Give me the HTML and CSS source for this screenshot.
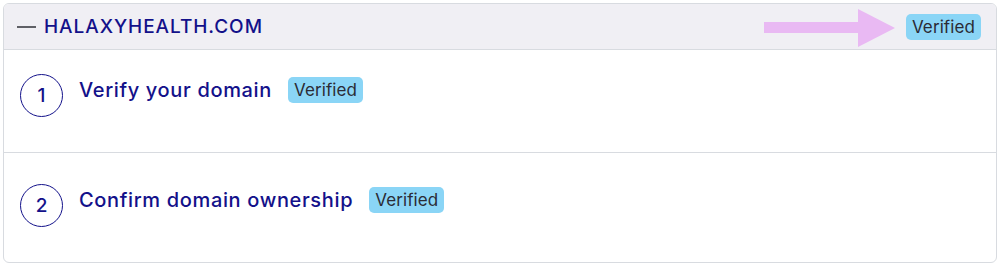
FILE: index.html
```html
<!DOCTYPE html>
<html>
<head>
<meta charset="utf-8">
<link rel="stylesheet" href="styles.css">
</head>
<body>
<div class="card">
  <div class="card-head">
    <span class="dash"></span>
    <span class="domain">HALAXYHEALTH.COM</span>
    <div class="head-right">
      <svg class="arrow" width="131" height="38" viewBox="0 0 131 38">
        <rect x="0" y="13" width="96" height="11" fill="#e9b9f3"/>
        <polygon points="94,0 131,19 94,38" fill="#e9b9f3"/>
      </svg>
      <span class="badge">Verified</span>
    </div>
  </div>
  <div class="step">
    <div class="num">1</div>
    <span class="step-title">Verify your domain</span>
    <span class="badge">Verified</span>
  </div>
  <div class="step">
    <div class="num">2</div>
    <span class="step-title">Confirm domain ownership</span>
    <span class="badge">Verified</span>
  </div>
</div>
</body>
</html>
```

FILE: styles.css
```css
html, body {
  margin: 0;
  padding: 0;
  background: #ffffff;
}
body {
  padding: 3px;
  font-family: "Inter", "Liberation Sans", sans-serif;
}
.card {
  width: 994px;
  height: 260px;
  border: 1px solid #d8dbe0;
  border-radius: 6px;
  box-sizing: border-box;
  overflow: hidden;
  display: flex;
  flex-direction: column;
}
.card-head {
  height: 46px;
  flex: none;
  background: #f0eff4;
  border-bottom: 1px solid #d8dbe0;
  display: flex;
  align-items: center;
  padding: 0 15px 0 13px;
  box-sizing: border-box;
}
.dash {
  width: 19px;
  height: 2px;
  background: #5f6066;
  margin-right: 8px;
  margin-top: 1px;
}
.domain {
  color: #13118a;
  font-size: 19px;
  font-weight: 500;
  letter-spacing: 0.95px;
}
.head-right {
  margin-left: auto;
  display: flex;
  align-items: center;
}
.arrow {
  display: block;
  margin-right: 11px;
  margin-top: 2px;
}
.badge {
  background: #8ad5f6;
  color: #2b2b35;
  font-size: 17px;
  line-height: 26px;
  height: 26px;
  padding: 0 6px;
  border-radius: 5px;
  letter-spacing: 0.1px;
}
.step {
  height: 103px;
  flex: none;
  box-sizing: border-box;
  display: flex;
  align-items: flex-start;
  padding: 24px 0 0 16px;
  border-bottom: 1px solid #d8dbe0;
}
.step:last-child {
  flex: 1;
  border-bottom: none;
  padding-top: 31px;
}
.num {
  width: 43px;
  height: 43px;
  box-sizing: border-box;
  border: 1.5px solid #13118a;
  border-radius: 50%;
  color: #13118a;
  display: flex;
  align-items: center;
  justify-content: center;
  font-size: 19px;
  font-weight: 500;
  margin-right: 16px;
  flex: none;
}
.step-title {
  color: #13118a;
  font-size: 20px;
  font-weight: 500;
  letter-spacing: 0.65px;
  line-height: 28px;
  margin-right: 16px;
  margin-top: 2px;
}
.step .badge {
  margin-top: 3px;
}
```
